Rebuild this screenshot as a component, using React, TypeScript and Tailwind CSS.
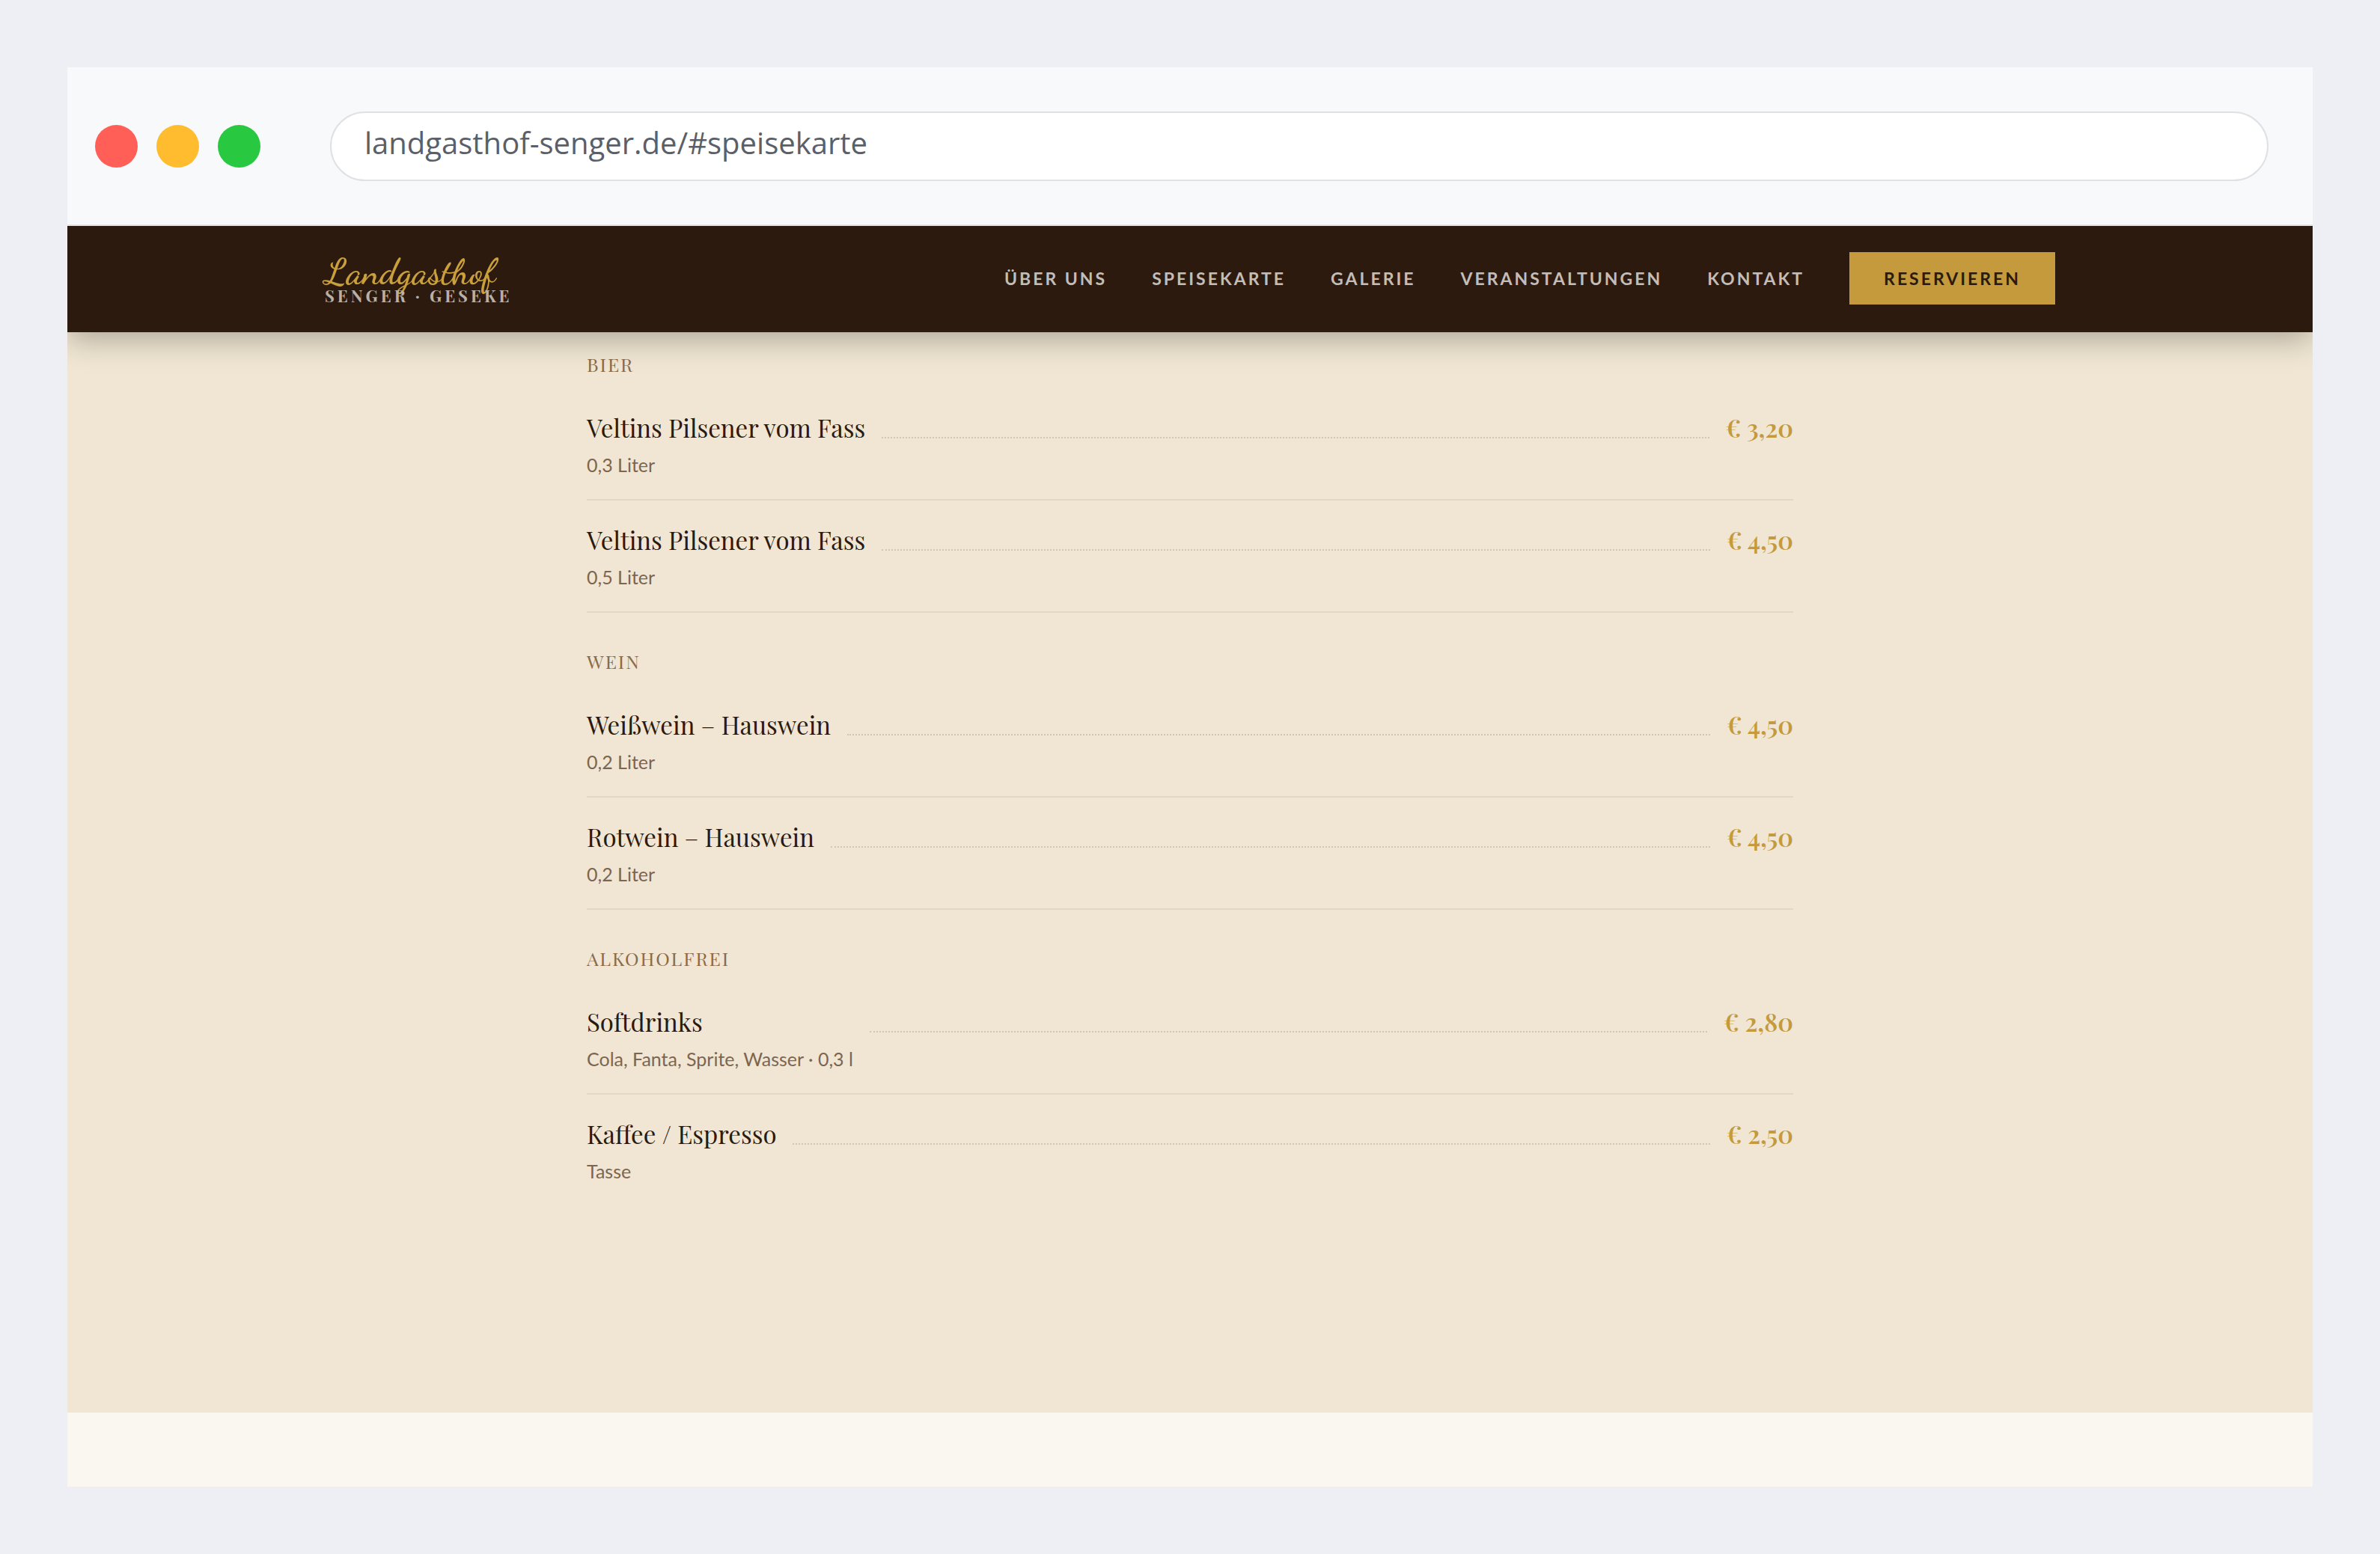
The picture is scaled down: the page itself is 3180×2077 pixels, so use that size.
type MenuItem = {
  name: string
  detail: string
  price: string
}

type MenuSection = {
  title: string
  items: MenuItem[]
}

const navLinks = [
  { label: 'Über uns', href: '#ueber-uns' },
  { label: 'Speisekarte', href: '#speisekarte' },
  { label: 'Galerie', href: '#galerie' },
  { label: 'Veranstaltungen', href: '#veranstaltungen' },
  { label: 'Kontakt', href: '#kontakt' },
];

const drinks: MenuSection[] = [
  {
    title: 'Bier',
    items: [
      { name: 'Veltins Pilsener vom Fass', detail: '0,3 Liter', price: '€ 3,20' },
      { name: 'Veltins Pilsener vom Fass', detail: '0,5 Liter', price: '€ 4,50' },
    ],
  },
  {
    title: 'Wein',
    items: [
      { name: 'Weißwein – Hauswein', detail: '0,2 Liter', price: '€ 4,50' },
      { name: 'Rotwein – Hauswein', detail: '0,2 Liter', price: '€ 4,50' },
    ],
  },
  {
    title: 'Alkoholfrei',
    items: [
      { name: 'Softdrinks', detail: 'Cola, Fanta, Sprite, Wasser · 0,3 l', price: '€ 2,80' },
      { name: 'Kaffee / Espresso', detail: 'Tasse', price: '€ 2,50' },
    ],
  },
];

function BrowserBar() {
  return (
    <div className="relative z-20 flex h-[212px] items-center border-b-2 border-[#e0e2e7] bg-[#f7f9fb] pr-[59px] pl-[37px]">
      <div className="flex gap-[25px]">
        <span className="size-[57px] rounded-full bg-[#ff5f57]" />
        <span className="size-[57px] rounded-full bg-[#febc2e]" />
        <span className="size-[57px] rounded-full bg-[#28c840]" />
      </div>
      <input
        type="text"
        aria-label="Adresse"
        defaultValue="landgasthof-senger.de/#speisekarte"
        className="ml-[93px] h-[93px] min-w-0 flex-1 rounded-full border-2 border-[#dfe1e5] bg-white px-11 pb-2.5 font-['Segoe_UI','Open_Sans',sans-serif] text-[40px] text-[#5a5f69] outline-none"
      />
    </div>
  );
}

function SiteHeader() {
  return (
    <header className="relative z-10 bg-[#2c1a0f] shadow-[0_8px_40px_rgba(0,0,0,0.3)]">
      <div className="mx-auto flex h-[142px] max-w-[2312px] items-center justify-between pb-0.5">
        <a href="#start" className="flex flex-col font-['Playfair_Display','Liberation_Serif',serif]">
          <span className="font-['Dancing_Script','Liberation_Serif',serif] text-[49px] leading-[46px] font-semibold text-[#c9a03c]">
            Landgasthof
          </span>
          <span className="text-[22px] leading-4 font-bold tracking-[4px] text-[#b9b0a9] uppercase">
            Senger · Geseke
          </span>
        </a>
        <nav className="flex items-center gap-[60px] font-['Lato',sans-serif] text-[23px] leading-[30px] font-bold tracking-[3px] uppercase">
          {navLinks.map(link => (
            <a key={link.href} href={link.href} className="text-[#c4bdb7]">
              {link.label}
            </a>
          ))}
          <a href="#reservieren" className="bg-[#c49a3c] px-[46px] py-5 text-[#2c1a0f]">
            Reservieren
          </a>
        </nav>
      </div>
    </header>
  );
}

function MenuRow({ item }: { item: MenuItem }) {
  return (
    <li className="flex items-start border-b-2 border-[#e2d7c4] pt-[27px] pb-6 font-['Playfair_Display','Liberation_Serif',serif]">
      <div>
        <h4 className="text-[33px] leading-[50px] text-[#2c1a0f]">{item.name}</h4>
        <p className="mt-[3px] font-['Lato',sans-serif] text-[25px] leading-[44px] text-[#7d6550]">{item.detail}</p>
      </div>
      <span className="mx-[22px] h-10 flex-1 border-b-2 border-dotted border-[#d3c6af]" />
      <span className="text-[33px] leading-[50px] font-semibold text-[#c49a3c]">{item.price}</span>
    </li>
  );
}

export default function App() {
  return (
    <div className="flex min-h-screen flex-col bg-[#eeeff4] p-[90px]">
      <div className="flex flex-1 flex-col overflow-hidden bg-[#faf7f0]">
        <BrowserBar />
        <SiteHeader />
        <main id="speisekarte" className="flex-1 bg-[#f0e6d3] pt-[26px] pb-[270px]">
          <div className="mx-auto flex max-w-[1612px] flex-col gap-12">
            {drinks.map((section, i) => (
              <section key={section.title}>
                <h3 className="mb-[15px] font-['Playfair_Display','Liberation_Serif',serif] text-[25px] leading-[34px] tracking-[2px] text-[#8b6b4a] uppercase">
                  {section.title}
                </h3>
                <ul className={i === drinks.length - 1 ? '[&>li:last-child]:border-b-0' : ''}>
                  {section.items.map(item => (
                    <MenuRow key={item.name + item.detail} item={item} />
                  ))}
                </ul>
              </section>
            ))}
          </div>
        </main>
        <div className="h-[99px]" />
      </div>
    </div>
  );
}
